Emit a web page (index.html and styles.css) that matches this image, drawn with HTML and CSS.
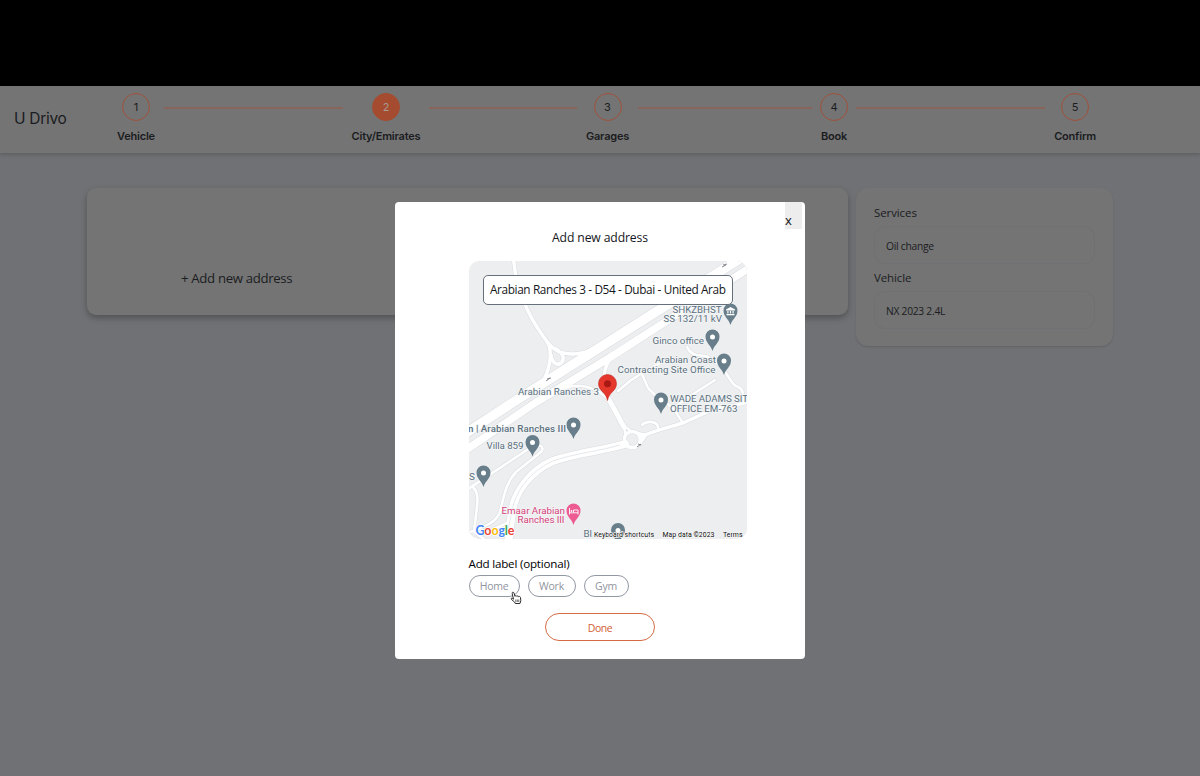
FILE: index.html
```html
<!DOCTYPE html>
<html lang="en">
<head>
<meta charset="utf-8">
<title>U Drivo</title>
<link rel="stylesheet" href="styles.css">
</head>
<body>
<div class="top-band"></div>
<header class="header">
  <div class="brand">U Drivo</div>
  <nav class="stepper">
    <div class="step"><span class="dot">1</span><span class="step-label">Vehicle</span></div>
    <span class="line"></span>
    <div class="step"><span class="dot active">2</span><span class="step-label">City/Emirates</span></div>
    <span class="line"></span>
    <div class="step"><span class="dot">3</span><span class="step-label">Garages</span></div>
    <span class="line"></span>
    <div class="step"><span class="dot">4</span><span class="step-label">Book</span></div>
    <span class="line"></span>
    <div class="step"><span class="dot">5</span><span class="step-label">Confirm</span></div>
  </nav>
</header>
<main class="content">
  <section class="address-card"><span class="add-address">+ Add new address</span></section>
  <aside class="summary">
    <h3 class="summary-title">Services</h3>
    <div class="summary-item">Oil change</div>
    <h3 class="summary-title">Vehicle</h3>
    <div class="summary-item">NX 2023 2.4L</div>
  </aside>
</main>
<div class="overlay">
  <section class="modal">
    <div class="modal-top"><button class="close">x</button></div>
    <h2 class="modal-title">Add new address</h2>
    <div class="map">
      <svg class="map-svg" width="278" height="278" viewBox="469 261 278 278">
        <defs>
          <g id="roads" fill="none" stroke-linecap="round" stroke-linejoin="round">
            <g class="highway">
              <path d="M460 437L515 401L610 341L760 246"/>
              <path class="thin" d="M460 454L535 403L610 357.500L760 261"/>
            </g>
            <g class="main-road">
              <path d="M625 444C600 451 572 454 553 461C530 471 515 492 512 511L508 545"/>
            </g>
            <g class="avenue"><path d="M607 396L624 427"/></g>
            <g class="street">
              <path d="M513.500 258C515 280 520 294 528 311C535 326 542 334 548 343C554 350 560 354 573 354C585 354 590 350 602 344"/>
              <path d="M548 343C553 354 549 371 543 381L530 392"/>
              <path d="M551 355C552 363 557 366 561 363C566 358 562 353 556 349"/>
              <path d="M612 356C606 364 604 370 604 378L608 398"/>
              <circle cx="632.300" cy="439.500" r="8"/>
              <path d="M640 437C656 430 670 427 683 423L705 413C722 404 738 407 750 401"/>
            </g>
            <g class="lane">
              <path d="M624 426L625.500 435M624 426L631 431M640 444L646 435L638 433"/>
              <path d="M683 423L675 411L668 404"/>
              <path d="M642 425C647 420 659 421 658 429"/>
              <path d="M618 391L630 381L642 373L664 361M642 374L648 388L659 399"/>
              <path d="M675 407L690 396L715 380"/>
              <path d="M687 347C692 358 702 354 708 357L719 365C727 371 730 383 736 386C744 389 743 393 744 403"/>
              <path d="M565 388C580 383 594 387 606 397"/>
              <path d="M465 491L530 448C538 443 546 446 541 452L516 472C505 484 504 497 500 512C496 522 487 526 470 532"/>
              <path d="M473 487C480 494 477 505 476 515L474 532L488 542"/>
              <path d="M511 521L490 531"/>
            </g>
          </g>
          <g id="pin"><path d="M0 12C-1.600 6-7 4-7-2.500A7 7 0 0 1 7-2.500C7 4 1.600 6 0 12Z"/></g>
        </defs>
        <rect x="469" y="261" width="278" height="278" fill="#edeef0"/>
        <use href="#roads" class="road-edge"/>
        <use href="#roads" class="road-fill"/>
        <g fill="none" stroke="#dfe1e4" stroke-width=".8">
          <path d="M620 445C600 451 572 454 553 461C530 471 515 492 512 511L508 530"/>
        </g>
        <g fill="none" stroke="#777b80" stroke-width=".9">
          <path d="M546 381L550 378M547 379L551 378M722 267L726 265M723 265L727 264M637 447L641 444M638 444L641 445"/>
        </g>
        <g fill="#687f8b">
          <use href="#pin" x="730.500" y="313"/><use href="#pin" x="712.500" y="339"/>
          <use href="#pin" x="724" y="363"/><use href="#pin" x="661" y="402"/>
          <use href="#pin" x="573.500" y="427"/><use href="#pin" x="532.500" y="444.500"/>
          <use href="#pin" x="483.500" y="475"/><use href="#pin" x="618" y="532.500"/>
        </g>
        <g fill="#fff">
          <circle cx="712.500" cy="337" r="2.500"/><circle cx="724" cy="361" r="2.500"/>
          <circle cx="661" cy="400" r="2.500"/><circle cx="573.500" cy="425" r="2.500"/>
          <circle cx="532.500" cy="442.500" r="2.500"/><circle cx="483.500" cy="473" r="2.500"/>
          <circle cx="618" cy="530.500" r="2.500"/>
          <path d="M726 309.500L730.500 307L735 309.500V310.500H726ZM726.500 314H734.500V315.200H726.500ZM727.300 311H728.500V313.500H727.300ZM729.900 311H731.100V313.500H729.900ZM732.500 311H733.700V313.500H732.500Z"/>
        </g>
        <use href="#pin" x="573.500" y="513" fill="#ec5b91"/>
        <path d="M569.500 508V514.500M569.500 512.800H578M578 514.500V510H573.500V512.500" fill="none" stroke="#fff" stroke-width=".9"/>
        <circle cx="571.500" cy="511" r=".9" fill="#fff"/>
        <path d="M607.500 400.500C606 392 598.500 391 598.500 383.500A9 9 0 0 1 616.500 383.500C616.500 391 609 392 607.500 400.500Z" fill="#e5372c" stroke="#bd2820" stroke-width=".6"/>
        <circle cx="607.500" cy="383.700" r="3.500" fill="#a81914"/>
        <g class="map-label">
          <text x="672.500" y="312.800" textLength="49">SHKZBHST</text>
          <text x="663.500" y="322.300" textLength="58.500">SS 132/11 kV</text>
          <text x="652.500" y="343.500" textLength="51.500">Ginco office</text>
          <text x="655" y="363.300" textLength="61">Arabian Coast</text>
          <text x="617.500" y="373" textLength="98">Contracting Site Office</text>
          <text x="518" y="394.500" textLength="81">Arabian Ranches 3</text>
          <text x="670" y="402.300" textLength="78">WADE ADAMS SIT</text>
          <text x="670" y="412" textLength="67.500">OFFICE EM-763</text>
          <text x="468" y="432" textLength="98" class="strong">n | Arabian Ranches III</text>
          <text x="486.500" y="449.300" textLength="37">Villa 859</text>
          <text x="469" y="479.500">S</text>
          <text x="583.500" y="537">Bl</text>
          <g class="hotel"><text x="501.500" y="513.800" textLength="63.500">Emaar Arabian</text>
          <text x="517.500" y="523.300" textLength="47">Ranches III</text></g>
        </g>
        <text x="475.500" y="534.500" class="google" textLength="39"><tspan fill="#4285f4">G</tspan><tspan fill="#ea4335">o</tspan><tspan fill="#fbbc05">o</tspan><tspan fill="#4285f4">g</tspan><tspan fill="#34a853">l</tspan><tspan fill="#ea4335">e</tspan></text>
        <g class="legal">
          <text x="594" y="537" textLength="60">Keyboard shortcuts</text>
          <text x="662.500" y="537" textLength="52">Map data ©2023</text>
          <text x="723" y="537" textLength="19.500">Terms</text>
        </g>
      </svg>
      <div class="search"><span class="search-text">Arabian Ranches 3 - D54 - Dubai - United Arab</span></div>
    </div>
    <div class="labels">
      <div class="labels-title">Add label (optional)</div>
      <div class="chips"><button class="chip home">Home</button><button class="chip work">Work</button><button class="chip gym">Gym</button></div>
    </div>
    <button class="done">Done</button>
    <svg class="cursor" width="12" height="14" viewBox="0 0 12 14"><path d="M3.500 8.200L2.200 2.600C1.900 1 3.500.6 4 2L5 5.300C5.300 4.400 6.500 4.400 6.900 5.400C7.400 4.700 8.400 4.900 8.700 5.800C9.300 5.200 10.300 5.600 10.500 6.500L10.800 9.500L10 12.500H5.300L4.500 11L1.500 8.500C.5 7.400 1.700 6.600 2.700 7.500Z" fill="#fff" stroke="#222" stroke-width=".95"/><path d="M5.800 8.500V11M7.300 8.500V11M8.800 8.500V11" stroke="#333" stroke-width=".7"/></svg>
  </section>
</div>
</body>
</html>
```
FILE: styles.css
```css
* { box-sizing: border-box; }
body { margin: 0; height: 776px; overflow: hidden; background: #6f7174; color: #1b1c1f; font-family: "Open Sans", "Noto Sans", sans-serif; }
button { font-family: inherit; padding: 0; }
.top-band { height: 86px; background: #000; }
.header { height: 67px; display: flex; background: #747474; box-shadow: 0 2px 4px rgba(0,0,0,.16); font-family: Inter, sans-serif; }
.brand { width: 117px; padding: 23px 0 0 14px; font-size: 15.5px; line-height: 20px; letter-spacing: -.3px; white-space: nowrap; }
.stepper { display: grid; grid-template-columns: 38px 197px 68px 166px 43px 192px 26px 207px 42px; padding-top: 7px; }
.step { display: flex; flex-direction: column; align-items: center; }
.dot { width: 28px; height: 28px; border: 1px solid #a0513b; border-radius: 50%; font-size: 11px; line-height: 27px; text-align: center; }
.dot.active { background: #a54c30; border-color: #a54c30; color: #a89b96; }
.step-label { margin-top: 8px; font-size: 11px; font-weight: 600; letter-spacing: -.2px; line-height: 14px; white-space: nowrap; }
.line { height: 2px; margin: 14px 9px 0; background: #88645b; }
.content { display: flex; align-items: flex-start; gap: 8px; padding: 35px 87px 0; }
.address-card { width: 761px; height: 127px; padding: 80px 0 0 94px; border-radius: 9px; background: #747474; box-shadow: 0 3px 6px rgba(0,0,0,.28); }
.add-address { display: block; font-size: 13.2px; letter-spacing: -.33px; line-height: 20px; }
.summary { width: 257px; height: 158px; padding: 17px 18px 0; border-radius: 12px; background: #747474; box-shadow: 0 1px 2px rgba(0,0,0,.14); }
.summary-title { margin: 0; font-size: 11.5px; letter-spacing: -.1px; font-weight: 400; line-height: 16px; }
.summary-item { height: 38px; margin: 5px 0 6px; padding-left: 11px; border: 1px solid #6e7073; border-radius: 11px; font-size: 10.3px; letter-spacing: -.28px; line-height: 38px; }
.overlay { position: absolute; top: 0; left: 0; width: 1200px; height: 776px; padding-top: 202px; display: flex; justify-content: center; align-items: flex-start; }
.modal { position: relative; width: 410px; height: 457px; border-radius: 4px; background: #fff; display: flex; flex-direction: column; align-items: center; color: #15171c; }
.modal-top { width: 100%; height: 27px; display: flex; justify-content: flex-end; padding-right: 3px; }
.close { width: 17px; height: 27px; padding: 9px 0 0; border: 0; background: #ededed; color: #111; font-size: 13px; line-height: 18px; text-align: left; }
.modal-title { margin: 0; height: 32px; font-size: 12.2px; letter-spacing: -.13px; font-weight: 400; line-height: 17px; }
.map { position: relative; width: 278px; height: 278px; margin-left: 16px; border-radius: 10px; overflow: hidden; }
.map-svg { display: block; font-family: Roboto, sans-serif; }
.road-edge { stroke: #d9dcdf; --edge: 1px; }
.road-fill { stroke: #fff; --edge: 0px; }
.highway { stroke-width: calc(9.5px + var(--edge)); }
.thin { stroke-width: calc(7.5px + var(--edge)); }
.main-road { stroke-width: calc(8px + var(--edge)); }
.avenue { stroke-width: calc(5px + var(--edge)); }
.street { stroke-width: calc(3.5px + var(--edge)); }
.lane { stroke-width: calc(2.6px + var(--edge)); }
.map-label { fill: #5b717e; font-size: 9.8px; stroke: #f4f5f6; stroke-width: 1.500px; paint-order: stroke; }
.strong { font-weight: 500; }
.hotel { fill: #d6417b; }
.google { font: 700 12.5px Lato, sans-serif; stroke: #fff; stroke-width: 1.500px; paint-order: stroke; }
.legal { font-size: 7px; fill: #111; stroke: #f3f3f4; stroke-width: 1.500px; paint-order: stroke; }
.search { position: absolute; top: 14px; left: 14px; width: 250px; height: 30px; padding: 0 0 0 6px; border: 1px solid #66707c; border-radius: 5px; background: #fff; }
.search-text { display: block; white-space: nowrap; font-size: 11.8px; letter-spacing: -.37px; line-height: 27px; }
.labels { width: 263px; margin: 17px 0 0; }
.labels-title { font-size: 11.6px; letter-spacing: -.2px; line-height: 16px; color: #000; }
.chips { display: flex; gap: 8px; margin-top: 3px; }
.chip { height: 22px; border: 1px solid #9298a3; border-radius: 11px; background: #fff; color: #8f949e; font-size: 10.5px; letter-spacing: -.25px; line-height: 21px; }
.home { width: 51px; }
.work { width: 48px; }
.gym { width: 45px; }
.done { width: 110px; height: 28px; margin-top: 16px; border: 1px solid #d56a43; border-radius: 14px; background: #fff; color: #d35d36; font-size: 10.5px; letter-spacing: -.5px; line-height: 28px; }
.cursor { position: absolute; left: 115px; top: 389px; }
```
